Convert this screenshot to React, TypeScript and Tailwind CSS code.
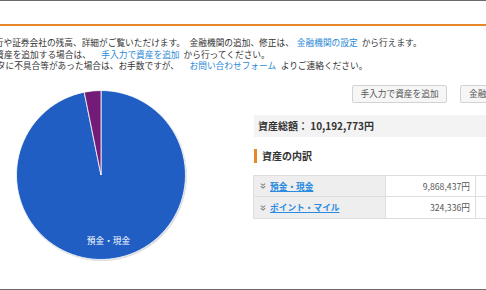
import React from "react";

const font = { fontFamily: '"Noto Sans CJK JP", "Noto Sans", sans-serif' };

function Chevron() {
  return (
    <svg width="6" height="6" viewBox="0 0 6 6" className="shrink-0">
      <path d="M0.8 0.6 L3 2.4 L5.2 0.6" fill="none" stroke="#888" strokeWidth="1.1" />
      <path d="M0.8 3.2 L3 5 L5.2 3.2" fill="none" stroke="#888" strokeWidth="1.1" />
    </svg>
  );
}

function Pie() {
  const cx = 90;
  const cy = 90;
  const r = 84.5;
  const ex = 73.22;
  const ey = 7.18;
  return (
    <svg width="180" height="180" viewBox="0 0 180 180">
      <circle cx={cx + 0.8} cy={cy + 1} r={r + 0.6} fill="#dcdcdc" />
      <path
        d={`M${cx},${cy} L${cx},${cy - r} A${r},${r} 0 1 1 ${ex},${ey} Z`}
        fill="#205ec4"
        stroke="#ffffff"
        strokeWidth="0.8"
      />
      <path
        d={`M${cx},${cy} L${ex},${ey} A${r},${r} 0 0 1 ${cx},${cy - r} Z`}
        fill="#741a78"
        stroke="#ffffff"
        strokeWidth="0.8"
      />
      <text
        x="97.5"
        y="158.5"
        textAnchor="middle"
        fill="#ffffff"
        fontSize="8.7"
        style={font}
      >
        預金・現金
      </text>
    </svg>
  );
}

export default function App() {
  return (
    <div
      className="w-[486px] h-[290px] overflow-hidden bg-white border-t border-b border-[#6a6a6a] text-[#333]"
      style={font}
    >
      <div className="h-[23px]" />
      <div className="h-[2px] bg-[#e8872a]" />
      <div className="mt-[11px] text-[8.7px] leading-[11.6px] whitespace-nowrap">
        <div className="flex">
          <span className="shrink-0 -ml-[13.9px]">銀行や証券会社の残高、詳細がご覧いただけます。</span>
          <span className="shrink-0 ml-[4.5px]">金融機関の追加、修正は、</span>
          <span className="shrink-0 ml-[3px] text-[#2a88d6]">金融機関の設定</span>
          <span className="shrink-0 ml-[4px]">から行えます。</span>
        </div>
        <div className="flex">
          <span className="shrink-0 -ml-[30.8px]">手動で資産を追加する場合は、</span>
          <span className="shrink-0 ml-[10.5px] text-[#2a88d6]">手入力で資産を追加</span>
          <span className="shrink-0 ml-[4px]">から行ってください。</span>
        </div>
        <div className="flex">
          <span className="shrink-0 -ml-[20.6px]">データに不具合等があった場合は、お手数ですが、</span>
          <span className="shrink-0 ml-[10.5px] text-[#2a88d6]">お問い合わせフォーム</span>
          <span className="shrink-0 ml-[4.5px]">よりご連絡ください。</span>
        </div>
      </div>

      <div className="mt-[13px] flex">
        <div className="w-[253px] shrink-0 pl-[11px]">
          <Pie />
        </div>
        <div className="w-[303px] shrink-0">
          <div className="flex gap-[13px] pl-[99px]">
            <div className="h-[18px] w-[95px] flex items-center justify-center rounded-[2px] border border-[#d2d2d2] bg-[#f6f6f6] text-[8.7px] text-[#555]">
              手入力で資産を追加
            </div>
            <div className="h-[18px] w-[95px] flex items-center justify-start pl-[8px] rounded-[2px] border border-[#d2d2d2] bg-[#f6f6f6] text-[8.7px] text-[#555]">
              金融機関を追加
            </div>
          </div>

          <div className="mt-[12px] ml-[1px] h-[22px] flex items-center bg-[#f3f3f3] pl-[4px] text-[10px] font-bold text-[#333]">
            資産総額：&nbsp;10,192,773円
          </div>

          <div className="mt-[12px] ml-[1px] flex items-center h-[14px]">
            <div className="w-[3px] h-[14px] bg-[#e8872a]" />
            <div className="ml-[5px] text-[10px] font-bold text-[#333]">資産の内訳</div>
          </div>

          <div className="mt-[12px] border-t border-l border-[#dedede] text-[8.7px]">
            <div className="flex h-[21.5px] border-b border-[#dedede]">
              <div className="w-[132px] flex items-center gap-[4px] bg-[#eeeeee] pl-[6px] border-r border-[#dedede]">
                <Chevron />
                <span className="font-bold text-[#2a8be0] underline">預金・現金</span>
              </div>
              <div className="w-[90px] flex items-center justify-end pr-[5px] text-[#555] border-r border-[#dedede]">
                9,868,437円
              </div>
              <div className="w-[80px] flex items-center justify-end pr-[5px] text-[#555]">
                96.82%
              </div>
            </div>
            <div className="flex h-[21.5px] border-b border-[#dedede]">
              <div className="w-[132px] flex items-center gap-[4px] bg-[#eeeeee] pl-[6px] border-r border-[#dedede]">
                <Chevron />
                <span className="font-bold text-[#2a8be0] underline">ポイント・マイル</span>
              </div>
              <div className="w-[90px] flex items-center justify-end pr-[5px] text-[#555] border-r border-[#dedede]">
                324,336円
              </div>
              <div className="w-[80px] flex items-center justify-end pr-[5px] text-[#555]">
                3.18%
              </div>
            </div>
          </div>
        </div>
      </div>
    </div>
  );
}
